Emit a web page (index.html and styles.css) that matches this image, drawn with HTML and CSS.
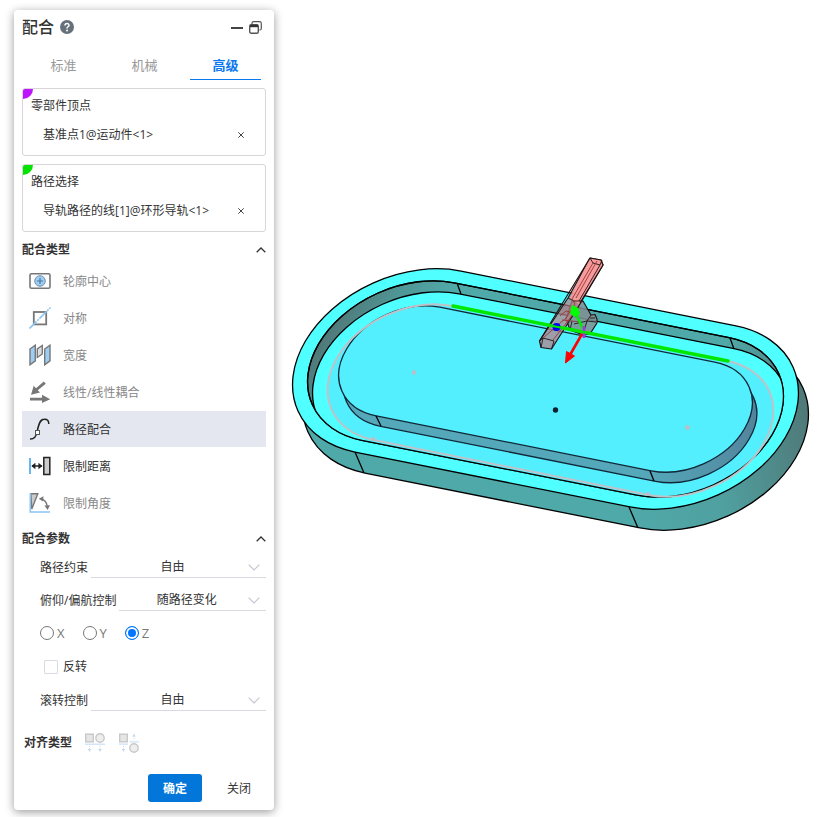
FILE: index.html
```html
<!DOCTYPE html>
<html lang="zh-CN">
<head>
<meta charset="utf-8">
<meta name="viewport" content="width=device-width, initial-scale=1">
<title>配合</title>
<link rel="stylesheet" href="styles.css">
</head>
<body>
<div class="app">
<form class="panel">
  <header class="title-bar">
    <h1>配合</h1>
    <button type="button" class="icon-btn" aria-label="帮助">
      <svg width="14" height="14" viewBox="0 0 14 14"><circle cx="7" cy="7" r="7" fill="#66717c"/><path d="M5 5.6C5 2.8 9.2 2.9 9 5.4C8.9 6.8 7 6.8 7 8.4" fill="none" stroke="#fff" stroke-width="1.5"/><circle cx="7" cy="10.5" r="1" fill="#fff"/></svg>
    </button>
    <span class="spacer"></span>
    <button type="button" class="icon-btn" aria-label="最小化">
      <svg width="12" height="12" viewBox="0 0 12 12"><path d="M0 7H12" stroke="#444" stroke-width="2"/></svg>
    </button>
    <button type="button" class="icon-btn" aria-label="还原">
      <svg width="13" height="13" viewBox="0 0 13 13" fill="none" stroke="#555"><path d="M3 3V2.2Q3 .7 4.5 .7H10.5Q12.3 .7 12.3 2.5V7.5Q12.3 9 10.5 9.2" stroke-width="1.2"/><rect x=".7" y="3.7" width="8.6" height="8.6" rx="1.5" fill="#fff" stroke-width="1.4"/><path d="M1 5H9" stroke="#333" stroke-width="2.4"/></svg>
    </button>
  </header>

  <nav class="tabs">
    <button type="button">标准</button>
    <button type="button">机械</button>
    <button type="button" class="active">高级</button>
  </nav>

  <section class="pick vertex">
    <h2>零部件顶点</h2>
    <div class="entry"><span>基准点1@运动件&lt;1&gt;</span><button type="button" class="icon-btn" aria-label="移除"><svg width="6" height="6" viewBox="0 0 6 6"><path d="M.3 .3L5.7 5.7M5.7 .3L.3 5.7" stroke="#444"/></svg></button></div>
  </section>
  <section class="pick path">
    <h2>路径选择</h2>
    <div class="entry"><span>导轨路径的线[1]@环形导轨&lt;1&gt;</span><button type="button" class="icon-btn" aria-label="移除"><svg width="6" height="6" viewBox="0 0 6 6"><path d="M.3 .3L5.7 5.7M5.7 .3L.3 5.7" stroke="#444"/></svg></button></div>
  </section>

  <div class="section-head"><h2>配合类型</h2><button type="button" class="icon-btn" aria-label="收起"><svg width="10" height="6" viewBox="0 0 10 6"><path d="M.7 5.3L5 1L9.3 5.3" fill="none" stroke="#333" stroke-width="1.3"/></svg></button></div>
  <div class="types">
    <button type="button" disabled><svg width="22" height="22" viewBox="0 0 22 22"><rect x="1" y="3.8" width="20" height="14.4" rx="1.5" fill="#fff" stroke="#777" stroke-width="1.6"/><circle cx="11" cy="11" r="5.3" fill="#9ccdf5" stroke="#7790a8"/><path d="M11 8V14M8 11H14" stroke="#53789c" stroke-width="1.2"/></svg><span>轮廓中心</span></button>
    <button type="button" disabled><svg width="22" height="22" viewBox="0 0 22 22"><rect x="4.8" y="5" width="12.4" height="12.4" fill="#fff" stroke="#777" stroke-width="1.8"/><path d="M.5 21.5L21.5 .5" stroke="#8cc4f0" stroke-width="1.6" stroke-dasharray="10 1 2 1"/></svg><span>对称</span></button>
    <button type="button" disabled><svg width="22" height="22" viewBox="0 0 22 22" stroke="#777" stroke-width="1.4"><path d="M1 5L6.3 1.2V16.8L1 20.8Z" fill="#9ccdf5"/><path d="M8.3 4.8L13.3 1.5V10L8.3 13.5Z" fill="#ddd"/><path d="M15.7 5L21 1.2V16.8L15.7 20.8Z" fill="#9ccdf5"/></svg><span>宽度</span></button>
    <button type="button" disabled><svg width="22" height="22" viewBox="0 0 22 22"><path d="M14.8 .6L7 7.2L4.7 4.8L2 13.8L11 11.5L8.8 9.2L16.8 2.7Z" fill="#777"/><path d="M1 16.8H13V13.8L21.2 18.2L13 22V19.6H1Z" fill="#777"/></svg><span>线性/线性耦合</span></button>
    <button type="button" class="selected"><svg width="22" height="22" viewBox="0 0 22 22" fill="none"><path d="M1 21C5 21.2 7.2 19 8 14C9.3 8 10.5 1.2 15 1.2C18.5 1 19.7 2.6 19.8 6" stroke="#222" stroke-width="1.5"/><rect x="6.5" y="12.5" width="4" height="4" fill="#fff" stroke="#555"/></svg><span>路径配合</span></button>
    <button type="button"><svg width="22" height="22" viewBox="0 0 22 22"><path d="M1 3V19" stroke="#42a4ed" stroke-width="1.6"/><path d="M3 11H13" stroke="#222" stroke-width="1.5"/><path d="M2.3 11L6.4 7.8V14.2ZM13.5 11L9.4 7.8V14.2Z" fill="#222"/><rect x="14.8" y="2.5" width="6" height="17" fill="#ccc" stroke="#222" stroke-width="1.5"/></svg><span>限制距离</span></button>
    <button type="button" disabled><svg width="22" height="22" viewBox="0 0 22 22"><path d="M1.8 1.8H8.8L2.8 17Z" fill="#ccc" stroke="#777" stroke-width="1.4"/><path d="M1.3 1V20H21" fill="none" stroke="#8cc4f0" stroke-width="1.6"/><path d="M12 7Q17.5 8 18.5 15" fill="none" stroke="#777" stroke-width="1.4"/><path d="M9.8 6.7L14.5 4.2L14 9.5ZM18.6 18L15.5 13.5L21 13.3Z" fill="#777"/></svg><span>限制角度</span></button>
  </div>

  <div class="section-head"><h2>配合参数</h2><button type="button" class="icon-btn" aria-label="收起"><svg width="10" height="6" viewBox="0 0 10 6"><path d="M.7 5.3L5 1L9.3 5.3" fill="none" stroke="#333" stroke-width="1.3"/></svg></button></div>
  <div class="params">
    <div class="field"><label for="constraint">路径约束</label><div class="select"><select id="constraint"><option>自由</option></select><svg width="12" height="7" viewBox="0 0 12 7"><path d="M.7 .7L6 6L11.3 .7" fill="none" stroke="#c3c6d0" stroke-width="1.2"/></svg></div></div>
    <div class="field"><label for="pitch">俯仰/偏航控制</label><div class="select"><select id="pitch"><option>随路径变化</option></select><svg width="12" height="7" viewBox="0 0 12 7"><path d="M.7 .7L6 6L11.3 .7" fill="none" stroke="#c3c6d0" stroke-width="1.2"/></svg></div></div>
    <div class="axes">
      <label><input type="radio" name="axis">X</label>
      <label><input type="radio" name="axis">Y</label>
      <label><input type="radio" name="axis" checked>Z</label>
    </div>
    <label class="check"><input type="checkbox">反转</label>
    <div class="field"><label for="roll">滚转控制</label><div class="select"><select id="roll"><option>自由</option></select><svg width="12" height="7" viewBox="0 0 12 7"><path d="M.7 .7L6 6L11.3 .7" fill="none" stroke="#c3c6d0" stroke-width="1.2"/></svg></div></div>
  </div>

  <div class="align">
    <h2>对齐类型</h2>
    <button type="button" class="icon-btn" aria-label="同向对齐" disabled><svg width="22" height="20" viewBox="0 0 22 20"><rect x="1.7" y="1.2" width="7.6" height="7.6" fill="#e6e6e6" stroke="#c8c8c8" stroke-width="1.4"/><circle cx="16" cy="5" r="4.2" fill="#eee" stroke="#c8c8c8" stroke-width="1.4"/><path d="M1 11.2H21" stroke="#cfe1f4" stroke-width="1.3"/><path d="M5.5 13V17M16 13V17" stroke="#c6daf0" stroke-dasharray="1 1"/><path d="M3.8 16H7.2L5.5 19ZM14.3 16H17.7L16 19Z" fill="#c6daf0"/></svg></button>
    <button type="button" class="icon-btn" aria-label="反向对齐" disabled><svg width="22" height="20" viewBox="0 0 22 20"><rect x="1.7" y="1.2" width="7.6" height="7.6" fill="#e6e6e6" stroke="#c8c8c8" stroke-width="1.4"/><circle cx="16" cy="15" r="4.2" fill="#eee" stroke="#c8c8c8" stroke-width="1.4"/><path d="M1 11.2H10M11.5 8.8H21" stroke="#cfe1f4" stroke-width="1.3"/><path d="M5.5 13V17M16 3V7" stroke="#c6daf0" stroke-dasharray="1 1"/><path d="M3.8 16H7.2L5.5 19ZM14.3 3.5H17.7L16 .5Z" fill="#c6daf0"/></svg></button>
  </div>

  <footer class="actions">
    <button type="submit" class="primary">确定</button>
    <button type="button">关闭</button>
  </footer>
</form>

<main class="scene">
<svg viewBox="274 10 544 800" role="img" aria-label="环形导轨模型">
  <defs>
    <linearGradient id="side" gradientUnits="userSpaceOnUse" x1="90" y1="60" x2="225" y2="-40"><stop offset="0" stop-color="#50a9a9"/><stop offset=".5" stop-color="#50a0a0"/><stop offset="1" stop-color="#507979"/></linearGradient>
    <linearGradient id="wall" gradientUnits="userSpaceOnUse" x1="-221" y1="0" x2="221" y2="0"><stop offset="0" stop-color="#507878"/><stop offset=".1" stop-color="#509696"/><stop offset=".2" stop-color="#50a9a9"/><stop offset=".8" stop-color="#50a9a9"/><stop offset=".96" stop-color="#508585"/></linearGradient>
    <linearGradient id="island" gradientUnits="userSpaceOnUse" x1="110" y1="40" x2="194" y2="-20"><stop offset="0" stop-color="#54a8ba"/><stop offset="1" stop-color="#53839b"/></linearGradient>
    <rect id="slotOuter" x="-234" y="-100" width="468" height="200" rx="100" vector-effect="non-scaling-stroke"/>
    <rect id="slotInner" x="-221" y="-87" width="442" height="174" rx="87" vector-effect="non-scaling-stroke"/>
    <rect id="slotPath" x="-208" y="-74" width="416" height="148" rx="74" vector-effect="non-scaling-stroke"/>
    <rect id="slotIsland" x="-194" y="-60" width="388" height="120" rx="60" vector-effect="non-scaling-stroke"/>
    <clipPath id="opening"><rect x="-221" y="-87" width="442" height="174" rx="87" transform="matrix(1.026 .205 -.53 .905 545.5 389)"/></clipPath>
  </defs>
  <g stroke="#000" stroke-width="1.3">
    <use href="#slotOuter" transform="matrix(1.026 .205 -.53 .905 555.5 410)" fill="url(#side)"/>
    <path d="M355 452L364 473M629 507L638 528"/>
    <use href="#slotOuter" transform="matrix(1.026 .205 -.53 .905 545.5 389)" fill="#50ffff"/>
    <use href="#slotInner" transform="matrix(1.026 .205 -.53 .905 545.5 389)" fill="url(#wall)"/>
    <g clip-path="url(#opening)">
      <use href="#slotInner" transform="matrix(1.026 .205 -.53 .905 550.5 400)" fill="#50ffff"/>
      <use href="#slotPath" transform="matrix(1.026 .205 -.53 .905 550.5 400.5)" fill="#54efff" stroke="none"/>
      <path d="M365 435L640 490V515L365 458Z" fill="#54efff" stroke="none"/>
    </g>
    <use href="#slotInner" transform="matrix(1.026 .205 -.53 .905 545.5 389)" fill="none"/>
    <path d="M457 283L461 294M730 338L734 349"/>
    <use href="#slotIsland" transform="matrix(1.026 .205 -.53 .905 550 399.5)" fill="url(#island)" stroke="#102838"/>
    <use href="#slotIsland" transform="matrix(1.026 .205 -.53 .905 545.5 389)" fill="#54efff" stroke="#102838"/>
    <path d="M376 416L381 426M650 471L654 481"/>
  </g>
  <use href="#slotPath" transform="matrix(1.026 .205 -.53 .905 550.5 400.5)" fill="none" stroke="#bfc3c8" stroke-width="2"/>
  <g fill="#b9bec8"><circle cx="414" cy="372.5" r="2.2"/><circle cx="687.5" cy="427.5" r="2.4"/><circle cx="373.5" cy="439" r="2"/><circle cx="648" cy="494" r="2"/></g>
  <circle cx="555.5" cy="410" r="2.7" fill="#102030"/>

  <g stroke="#211416" stroke-width="1.2" stroke-linejoin="round">
    <path d="M572 301L583 301L591 315L595 314.500L597 319L597 323L590 334L583 335L570 330L566 319Z" fill="#7f9093" fill-opacity=".88"/>
    <path d="M591 315L587 321L596 322M590 318L595 318M587 321L574 324M570 330L572 321M587 321L583 334" fill="none" stroke-width=".9"/>
    <path d="M590 258L601 260L603 265L577 309L554 345L551.500 349L541 347.500L539.500 341L568 298Z" fill="#b98088" fill-opacity=".72"/>
    <path d="M590 258L601 260L603 265L579 304L570 298Z" fill="#ff9a98" fill-opacity=".85" stroke="none"/>
    <path d="M590 258L593 263L600 265L602 260M600 265L579 301M539.500 341L543 338L554 341L551.500 349M543 338L541 347.500M568 298L574 301L583 301" fill="none" stroke-width=".9"/>
    <path d="M593 263L572 299L575 304L566 318L543 338M597 261L576 298M560 316L566 311L574 313L553 340M562 320L581 322" fill="none" stroke="#94383d" stroke-width=".9"/>
    <path d="M590 258L601 260L603 265L580 303M590 258L539.500 341" fill="none"/>
  </g>
  <path d="M453 306L728 361" stroke="#00e800" stroke-width="3.4" stroke-linecap="round"/>
  <circle cx="556.500" cy="327" r="4" fill="#00f"/>
  <path d="M550 325.400L563 328" stroke="#00e800" stroke-width="2"/>
  <path d="M582 334L570.500 354" stroke="#f00" stroke-width="2.6"/>
  <path d="M566.500 351.500L574.500 356L565.500 363Z" fill="#f00" stroke="#f00" stroke-width="1"/>
  <path d="M583 329L576 314" stroke="#00f000" stroke-width="2.6"/>
  <path d="M572 305L578 308L580 314L574 317L570 313Z" fill="#0f0"/>
  <path d="M584 326V338" stroke="#a832e8" stroke-width="2.6"/>
  <path d="M570 329.400L590 333.400" stroke="#00e800" stroke-width="2.4"/>
</svg>
</main>
</div>
</body>
</html>
```
FILE: styles.css
```css
* { box-sizing: border-box; }
body {
  margin: 0;
  background: #fff;
  color: #333;
  font: 12px/18px "Open Sans", "Noto Sans CJK SC", sans-serif;
}
h1, h2 { margin: 0; font-size: 12px; line-height: 18px; }
button, select, input { margin: 0; font: inherit; color: inherit; }
button { padding: 0; border: 0; background: none; }
svg { display: block; flex: none; }

.app { display: flex; align-items: flex-start; padding: 10px 0 7px 14px; }
.panel {
  flex: none;
  width: 260px;
  padding: 0 8px 8px;
  border-radius: 4px;
  background: #fff;
  box-shadow: 0 2px 10px rgba(0, 0, 0, .4);
}
.scene { flex: 1; min-width: 0; }
.scene svg { width: 100%; height: auto; }

.icon-btn { display: flex; align-items: center; justify-content: center; }
.title-bar { display: flex; align-items: center; gap: 6px; height: 34px; padding-right: 4px; }
.title-bar h1 { font-size: 16px; font-weight: 500; line-height: 24px; }
.spacer { flex: 1; }

.tabs { display: flex; gap: 10px; height: 36px; padding: 0 5px 0 6px; margin-bottom: 8px; }
.tabs button { flex: 1; padding-top: 6px; border-bottom: 1px solid transparent; color: #999; font-size: 13px; }
.tabs .active { border-color: #0a78f0; color: #0a78f0; font-weight: 700; }

.pick {
  position: relative;
  height: 68px;
  margin-bottom: 8px;
  padding: 8px;
  overflow: hidden;
  border: 1px solid #d9d5d9;
  border-radius: 3px;
}
.pick::before { content: ""; position: absolute; top: 0; left: 0; width: 10px; height: 10px; border-bottom-right-radius: 10px; }
.vertex::before { background: #be14ff; }
.path::before { background: #00e400; }
.pick.path { margin-bottom: 0; }
.pick h2 { position: relative; font-weight: 400; }
.entry { display: flex; justify-content: space-between; padding: 11px 13px 0 12px; }

.section-head { display: flex; align-items: center; justify-content: space-between; height: 31px; padding-top: 4px; }
.types { display: grid; gap: 1px; }
.types button { display: flex; align-items: center; gap: 12px; height: 36px; padding-left: 7px; color: #333; }
.types span { padding-top: 2px; }
.types button:disabled { color: #888; }
.types .selected { background: #e4e7ef; }

.params { display: grid; gap: 7px; padding-left: 18px; }
.field { display: flex; align-items: center; gap: 3px; height: 26px; }
.field label { padding-top: 6px; }
.select { display: flex; position: relative; flex: 1; height: 26px; align-items: center; border-bottom: 1px solid #d9dae0; }
.select select { width: 100%; height: 24px; padding: 4px 12px 0 0; border: 0; outline: 0; appearance: none; background: transparent; text-align: center; text-align-last: center; }
.select svg { position: absolute; top: 12px; right: 6px; pointer-events: none; }
.axes { display: flex; align-items: center; gap: 18px; height: 30px; color: #777; font-size: 13px; }
.axes label { display: flex; align-items: center; gap: 3px; }
.axes input { appearance: none; width: 14px; height: 14px; border: 1px solid #777; border-radius: 50%; }
.axes input:checked { border-color: #0075ff; background: #0075ff; box-shadow: inset 0 0 0 2px #fff; }
.check { display: flex; align-items: center; gap: 5px; height: 23px; padding-left: 4px; }
.check input { appearance: none; width: 14px; height: 14px; border: 1px solid #d9dbe4; border-radius: 1px; }

.align { display: flex; align-items: center; gap: 12px; height: 36px; margin-top: 13px; padding: 2px 0 0 2px; }
.actions { display: flex; justify-content: flex-end; gap: 10px; margin-top: 14px; }
.actions button { width: 54px; height: 28px; padding-top: 2px; border-radius: 3px; }
.actions .primary { background: #0277d9; color: #fff; font-weight: 700; }
```
